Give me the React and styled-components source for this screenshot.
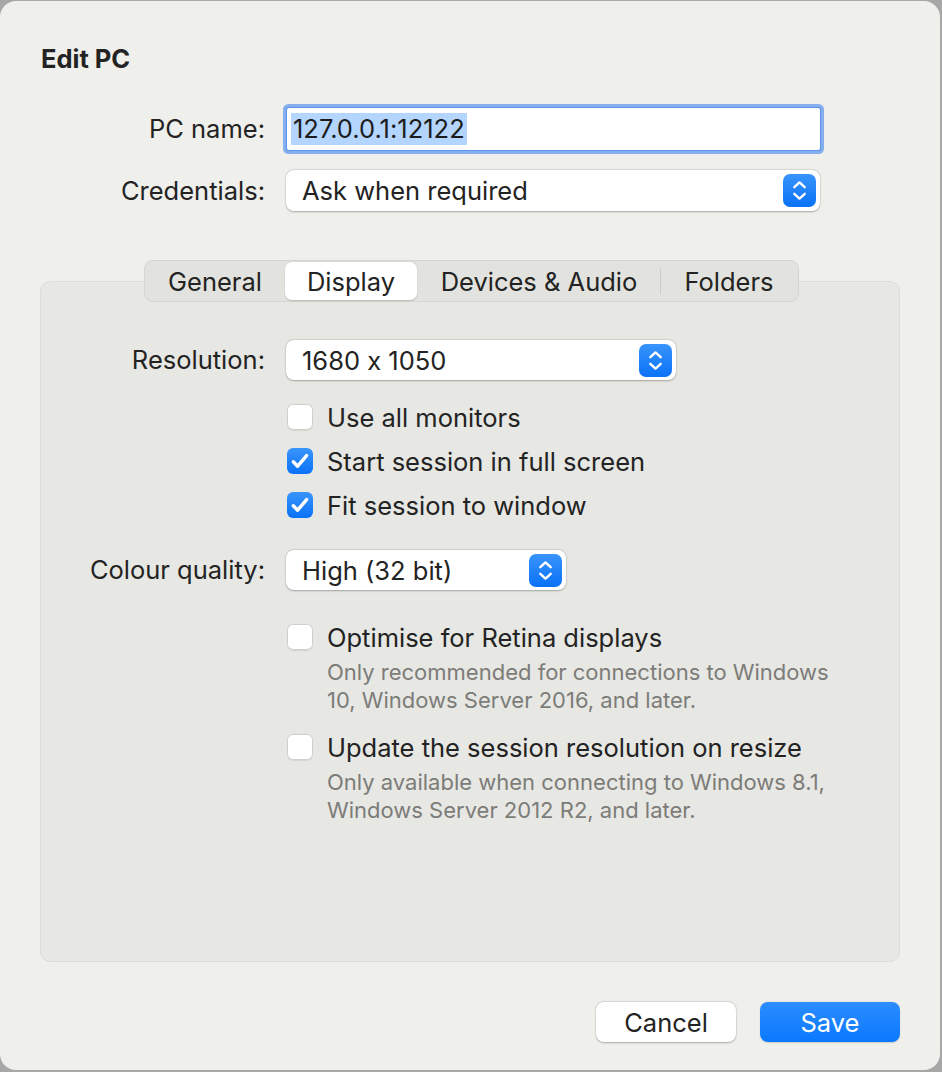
import React from 'react';
import styled, { createGlobalStyle } from 'styled-components';

const Global = createGlobalStyle`
  html, body { margin: 0; padding: 0; }
  body {
    background: #a7a7a7;
    font-family: Inter, "Noto Sans", "Liberation Sans", sans-serif;
    font-feature-settings: "calt" 0;
    -webkit-font-smoothing: antialiased;
  }
`;

const Screen = styled.div`
  width: 942px;
  height: 1072px;
  box-sizing: border-box;
  padding: 1px 2px 2px 0;
  overflow: hidden;
`;

const Window = styled.div`
  height: 100%;
  box-sizing: border-box;
  background: #efefeb;
  border-radius: 16px;
  padding: 44px 40px 0 40px;
  display: flex;
  flex-direction: column;
  color: #242424;
`;

const Title = styled.h1`
  margin: 0;
  padding-left: 1px;
  font-size: 25.5px;
  line-height: 28px;
  font-weight: 700;
  color: #232323;
`;

const FormRow = styled.div`
  display: grid;
  grid-template-columns: 225px auto;
  column-gap: 21px;
  align-items: center;
  justify-content: start;
  margin-top: ${p => p.$mt || 0}px;
`;

const PanelRow = styled(FormRow)`
  grid-template-columns: 224px auto;
`;

const Label = styled.div`
  text-align: right;
  font-size: 25.5px;
  line-height: 32px;
  color: #232323;
  white-space: nowrap;
`;

const TextField = styled.div`
  width: 533px;
  height: 42px;
  margin-left: 1px;
  box-sizing: border-box;
  background: #fff;
  box-shadow: 0 0 0 1px #5d95ea, 0 0 0 4px #84aeee;
  border-radius: 2px;
  display: flex;
  align-items: center;
  padding-left: 4px;
`;

const Selected = styled.span`
  background: #b4d5fe;
  padding: 0 2px;
  font-size: 25.5px;
  line-height: 32px;
  color: #1c1c1c;
`;

const SelectBox = styled.div`
  width: ${p => p.$w}px;
  height: ${p => p.$h || 40}px;
  box-sizing: border-box;
  background: #fff;
  border-radius: 8px;
  box-shadow: 0 0.5px 2px rgba(0, 0, 0, 0.28), 0 0 0 0.5px rgba(0, 0, 0, 0.06);
  display: flex;
  align-items: center;
  justify-content: space-between;
  padding: 0 4px 0 16px;
  font-size: 25.5px;
  color: #232323;
`;

const Stepper = styled.div`
  width: 33px;
  height: 33px;
  border-radius: 7px;
  background: linear-gradient(#3994fb, #0a72f7);
  display: flex;
  align-items: center;
  justify-content: center;
`;

const TabArea = styled.div`
  margin-top: 49px;
  display: flex;
  flex-direction: column;
`;

const TabBar = styled.div`
  align-self: center;
  position: relative;
  z-index: 1;
  margin-bottom: -21px;
  margin-left: 3px;
  height: 42px;
  box-sizing: border-box;
  background: #e2e2de;
  border: 1px solid #d5d5d1;
  border-radius: 9px;
  padding: 1px;
  display: flex;
  align-items: center;
`;

const Tab = styled.div`
  width: ${p => p.$w}px;
  height: 38px;
  border-radius: 7px;
  display: flex;
  align-items: center;
  justify-content: center;
  font-size: 25.5px;
  color: #232323;
  background: ${p => (p.$active ? '#ffffff' : 'transparent')};
  box-shadow: ${p => (p.$active ? '0 0.5px 1.5px rgba(0,0,0,0.18)' : 'none')};
`;

const TabDivider = styled.div`
  width: 1px;
  height: 26px;
  background: ${p => (p.$hidden ? 'transparent' : '#cdcdc9')};
`;

const Panel = styled.div`
  height: 681px;
  box-sizing: border-box;
  background: #e7e7e3;
  border: 1px solid #dcdcd8;
  border-radius: 10px;
  padding-top: 58px;
  display: flex;
  flex-direction: column;
`;

const CheckLine = styled.label`
  display: flex;
  align-items: center;
  gap: 14px;
  height: 32px;
  padding-left: 1px;
  font-size: 25.5px;
  color: #232323;
  white-space: nowrap;
`;

const Box = styled.span`
  width: 26px;
  height: 26px;
  box-sizing: border-box;
  border-radius: 6px;
  flex: none;
  display: flex;
  align-items: center;
  justify-content: center;
  background: ${p => (p.$on ? 'linear-gradient(#3a95fc, #0a72f7)' : '#ffffff')};
  box-shadow: ${p =>
    p.$on ? 'none' : 'inset 0 0 0 1px #cfcfcc, 0 0.5px 1px rgba(0,0,0,0.08)'};
`;

const Hint = styled.div`
  padding-left: 41px;
  font-size: 22px;
  line-height: 28px;
  color: #7c7c79;
  margin-top: 5px;
`;

const Footer = styled.div`
  margin-top: 40px;
  display: flex;
  justify-content: flex-end;
  gap: 24px;
`;

const Button = styled.button`
  width: 140px;
  height: 40px;
  border: none;
  border-radius: 8px;
  font-family: inherit;
  font-feature-settings: inherit;
  font-size: 25.5px;
  color: ${p => (p.$primary ? '#ffffff' : '#232323')};
  background: ${p => (p.$primary ? 'linear-gradient(#2b8dff, #0a79ff)' : '#ffffff')};
  box-shadow: ${p =>
    p.$primary
      ? '0 0.5px 1.5px rgba(0,0,0,0.15)'
      : '0 0.5px 2px rgba(0,0,0,0.28), 0 0 0 0.5px rgba(0,0,0,0.06)'};
  padding: 0;
`;

const Updown = () => (
  <Stepper>
    <svg width="33" height="33" viewBox="0 0 33 33">
      <path
        d="M11.3 13.2 L16.5 8.4 L21.7 13.2 M11.3 19.8 L16.5 24.6 L21.7 19.8"
        fill="none"
        stroke="#fff"
        strokeWidth="2.4"
        strokeLinecap="round"
        strokeLinejoin="round"
      />
    </svg>
  </Stepper>
);

const Select = ({ w, h, children }) => (
  <SelectBox $w={w} $h={h}>
    <span>{children}</span>
    <Updown />
  </SelectBox>
);

const Checkbox = ({ on, children }) => (
  <CheckLine>
    <Box $on={on}>
      {on && (
        <svg width="26" height="26" viewBox="0 0 26 26">
          <path
            d="M6.3 13.8 L10.6 18.2 L19.6 7.6"
            fill="none"
            stroke="#fff"
            strokeWidth="3.4"
            strokeLinecap="round"
            strokeLinejoin="round"
          />
        </svg>
      )}
    </Box>
    {children}
  </CheckLine>
);

export default function App() {
  return (
    <Screen>
      <Global />
      <Window>
        <Title>Edit PC</Title>

        <FormRow $mt={35}>
          <Label>PC name:</Label>
          <TextField>
            <Selected>127.0.0.1:12122</Selected>
          </TextField>
        </FormRow>
        <FormRow $mt={20}>
          <Label>Credentials:</Label>
          <Select w={534} h={41}>Ask when required</Select>
        </FormRow>

        <TabArea>
          <TabBar>
            <Tab $w={138}>General</Tab>
            <TabDivider $hidden />
            <Tab $w={132} $active>Display</Tab>
            <TabDivider $hidden />
            <Tab $w={242}>Devices &amp; Audio</Tab>
            <TabDivider />
            <Tab $w={136}>Folders</Tab>
          </TabBar>
          <Panel>
            <PanelRow>
              <Label>Resolution:</Label>
              <Select w={390}>1680 x 1050</Select>
            </PanelRow>
            <PanelRow $mt={21}>
              <span />
              <Checkbox>Use all monitors</Checkbox>
            </PanelRow>
            <PanelRow $mt={12}>
              <span />
              <Checkbox on>Start session in full screen</Checkbox>
            </PanelRow>
            <PanelRow $mt={12}>
              <span />
              <Checkbox on>Fit session to window</Checkbox>
            </PanelRow>
            <PanelRow $mt={29}>
              <Label>Colour quality:</Label>
              <Select w={280}>High (32 bit)</Select>
            </PanelRow>
            <PanelRow $mt={31}>
              <span />
              <div>
                <Checkbox>Optimise for Retina displays</Checkbox>
                <Hint>
                  Only recommended for connections to Windows
                  <br />
                  10, Windows Server 2016, and later.
                </Hint>
              </div>
            </PanelRow>
            <PanelRow $mt={17}>
              <span />
              <div>
                <Checkbox>Update the session resolution on resize</Checkbox>
                <Hint>
                  Only available when connecting to Windows 8.1,
                  <br />
                  Windows Server 2012 R2, and later.
                </Hint>
              </div>
            </PanelRow>
          </Panel>
        </TabArea>

        <Footer>
          <Button>Cancel</Button>
          <Button $primary>Save</Button>
        </Footer>
      </Window>
    </Screen>
  );
}
